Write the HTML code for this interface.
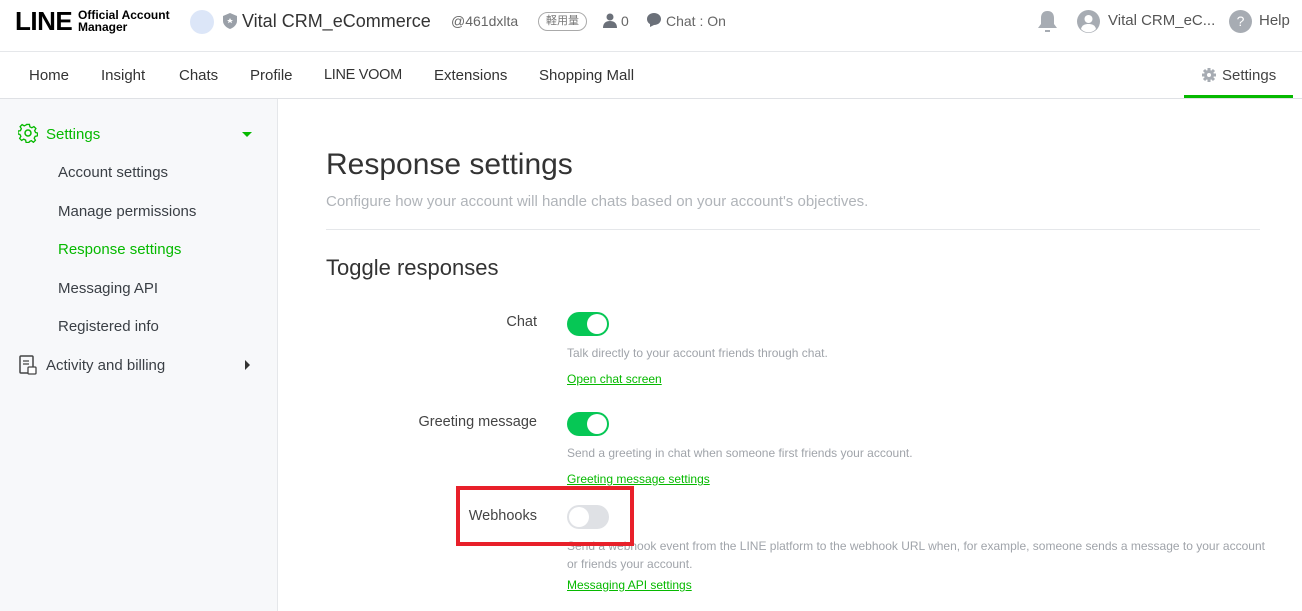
<!DOCTYPE html>
<html><head><meta charset="utf-8"><style>
*{margin:0;padding:0;box-sizing:border-box}
body{width:1302px;height:611px;overflow:hidden;font-family:"Liberation Sans","Noto Sans CJK JP",sans-serif;background:#fff;color:#333;position:relative}
.a{position:absolute;white-space:nowrap}
.hdr{position:absolute;left:0;top:0;width:1302px;height:52px;border-bottom:1px solid #e5e7ea}
.nav{position:absolute;left:0;top:52px;width:1302px;height:47px;border-bottom:1px solid #dfe1e5}
.nav span{position:absolute;top:15px;font-size:15px;color:#333}
.side{position:absolute;left:0;top:99px;width:278px;height:512px;background:#f7f8fa;border-right:1px solid #e5e7ea}
.side .i{position:absolute;left:58px;font-size:15px;color:#3a3f45}
.tg{position:absolute;left:567px;width:42px;height:24px;border-radius:12px;background:#06c755}
.tg::after{content:"";position:absolute;right:2px;top:2px;width:20px;height:20px;border-radius:50%;background:#fff}
.tg.off{background:#dfe1e5}
.tg.off::after{left:2px;right:auto}
.lbl{position:absolute;font-size:14.5px;color:#444;text-align:right;width:200px;left:337px}
.d{position:absolute;left:567px;font-size:12px;color:#a0a4aa}
.l{position:absolute;left:567px;font-size:12px;color:#06b900;text-decoration:underline}
</style></head><body>
<div class="hdr">
 <div class="a" style="left:15px;top:6px;font-size:26px;font-weight:bold;color:#000;letter-spacing:-0.5px">LINE</div>
 <div class="a" style="left:78px;top:9px;font-size:12px;font-weight:bold;line-height:12px;color:#000">Official Account<br>Manager</div>
 <div class="a" style="left:190px;top:10px;width:24px;height:24px;border-radius:50%;background:#dce6f8"></div>
 <svg class="a" style="left:223px;top:13px" width="14" height="16" viewBox="0 0 14 16"><path d="M7 0L14 3V8C14 12 10 15 7 16C4 15 0 12 0 8V3Z" fill="#9aa0a8"/><path d="M7 5l1 2h2l-1.6 1.3.6 2L7 9l-2 1.3.6-2L4 7h2z" fill="#fff"/></svg>
 <div class="a" style="left:242px;top:11px;font-size:18px;color:#333">Vital CRM_eCommerce</div>
 <div class="a" style="left:451px;top:13px;font-size:14px;color:#666">@461dxlta</div>
 <div class="a" style="left:538px;top:12px;width:49px;height:19px;border:1px solid #aaa;border-radius:10px;font-size:11px;color:#777;text-align:center;line-height:17px">軽用量</div>
 <svg class="a" style="left:603px;top:13px" width="14" height="15" viewBox="0 0 14 15"><circle cx="7" cy="4" r="3.5" fill="#6b7079"/><path d="M0 15C0 10 3 8 7 8S14 10 14 15Z" fill="#6b7079"/></svg>
 <div class="a" style="left:621px;top:13px;font-size:14px;color:#666">0</div>
 <svg class="a" style="left:647px;top:13px" width="14" height="14" viewBox="0 0 14 14"><path d="M7 0C11 0 14 2.5 14 6S11 12 7 12L3 14V11C1 10 0 8 0 6 0 2.5 3 0 7 0Z" fill="#6b7079"/></svg>
 <div class="a" style="left:666px;top:13px;font-size:14px;color:#666">Chat : On</div>
 <svg class="a" style="left:1037px;top:11px" width="21" height="22" viewBox="0 0 21 22"><path d="M10.5 0C6 0 4 3 4 7V13L1 17H20L17 13V7C17 3 15 0 10.5 0Z M8 19H13V21H8Z" fill="#a7acb3"/></svg>
 <svg class="a" style="left:1077px;top:10px" width="23" height="23" viewBox="0 0 23 23"><circle cx="11.5" cy="11.5" r="11.5" fill="#a7acb3"/><circle cx="11.5" cy="9" r="4" fill="#fff"/><path d="M4 19C5 15 8 14 11.5 14S18 15 19 19A10 10 0 0 1 4 19Z" fill="#fff"/></svg>
 <div class="a" style="left:1108px;top:12px;font-size:15px;color:#555">Vital CRM_eC...</div>
 <div class="a" style="left:1229px;top:10px;width:23px;height:23px;border-radius:50%;background:#a7acb3;color:#fff;font-size:14px;text-align:center;line-height:23px">?</div>
 <div class="a" style="left:1259px;top:12px;font-size:15px;color:#555">Help</div>
</div>
<div class="nav">
 <span style="left:29px">Home</span><span style="left:101px">Insight</span><span style="left:179px">Chats</span><span style="left:250px">Profile</span><span style="left:324px;font-size:14.5px;letter-spacing:-0.3px">LINE VOOM</span><span style="left:434px">Extensions</span><span style="left:539px">Shopping Mall</span>
 <svg class="a" style="left:1202px;top:16px" width="14" height="14" viewBox="0 0 14 14"><circle cx="7" cy="7" r="5" fill="#a7acb3"/><g stroke="#a7acb3" stroke-width="3"><path d="M7 0V14M0 7H14M2 2L12 12M12 2L2 12"/></g><circle cx="7" cy="7" r="2" fill="#fff"/></svg>
 <span style="left:1222px;color:#444">Settings</span>
 <div class="a" style="left:1184px;top:43px;width:109px;height:3px;background:#06b900"></div>
</div>
<div class="side">
 <svg class="a" style="left:18px;top:24px" width="20" height="20" viewBox="0 0 20 20"><path d="M8.5 1h3l.5 2.5 2 1 2.2-1.3 2.1 2.1L17 7.5l1 2 2 .5v3l-2.5.5-1 2 1.3 2.2-2.1 2.1L13.5 18l-2 1-.5 1h-3l-.5-2.5-2-1-2.2 1.3-2.1-2.1L2.5 13.5l-1-2L-.5 11V8l2.5-.5 1-2L1.7 3.3 3.8 1.2 6 2.5l2-1z" fill="none" stroke="#06b900" stroke-width="1.4" transform="translate(.5 .5) scale(.95)"/><circle cx="10" cy="10" r="3" fill="none" stroke="#06b900" stroke-width="1.5"/></svg>
 <div class="a" style="left:46px;top:27px;font-size:15px;color:#06b900">Settings</div>
 <div class="a" style="left:242px;top:33px;border-left:5px solid transparent;border-right:5px solid transparent;border-top:5px solid #06b900"></div>
 <div class="i" style="top:65px">Account settings</div>
 <div class="i" style="top:104px">Manage permissions</div>
 <div class="i" style="top:142px;color:#06b900">Response settings</div>
 <div class="i" style="top:181px">Messaging API</div>
 <div class="i" style="top:219px">Registered info</div>
 <svg class="a" style="left:19px;top:256px" width="18" height="20" viewBox="0 0 18 20"><rect x="1" y="1" width="13" height="17" rx="1" fill="none" stroke="#444" stroke-width="1.5"/><path d="M4 6H10M4 9H10" stroke="#444" stroke-width="1.3"/><rect x="9" y="12" width="8" height="7" rx="1" fill="#fff" stroke="#444" stroke-width="1.3"/></svg>
 <div class="a" style="left:46px;top:258px;font-size:15px;color:#3a3f45">Activity and billing</div>
 <div class="a" style="left:245px;top:261px;border-top:5px solid transparent;border-bottom:5px solid transparent;border-left:5px solid #333"></div>
</div>
<div class="a" style="left:326px;top:148px;font-size:30px;color:#333">Response settings</div>
<div class="a" style="left:326px;top:193px;font-size:15px;color:#b0b4b9">Configure how your account will handle chats based on your account's objectives.</div>
<div class="a" style="left:326px;top:229px;width:934px;height:1px;background:#e5e7ea"></div>
<div class="a" style="left:326px;top:255px;font-size:22px;color:#333">Toggle responses</div>
<div class="lbl" style="top:314px">Chat</div>
<div class="tg" style="top:312px"></div>
<div class="d" style="top:346px">Talk directly to your account friends through chat.</div>
<div class="l" style="top:372px">Open chat screen</div>
<div class="lbl" style="top:414px">Greeting message</div>
<div class="tg" style="top:412px"></div>
<div class="d" style="top:446px">Send a greeting in chat when someone first friends your account.</div>
<div class="l" style="top:472px">Greeting message settings</div>
<div class="lbl" style="top:508px">Webhooks</div>
<div class="tg off" style="top:505px"></div>
<div class="d" style="top:537px;line-height:18px;white-space:normal;width:700px">Send a webhook event from the LINE platform to the webhook URL when, for example, someone sends a message to your account or friends your account.</div>
<div class="l" style="top:578px">Messaging API settings</div>
<div class="a" style="left:456px;top:486px;width:178px;height:60px;border:4px solid #e8202a"></div>
</body></html>
